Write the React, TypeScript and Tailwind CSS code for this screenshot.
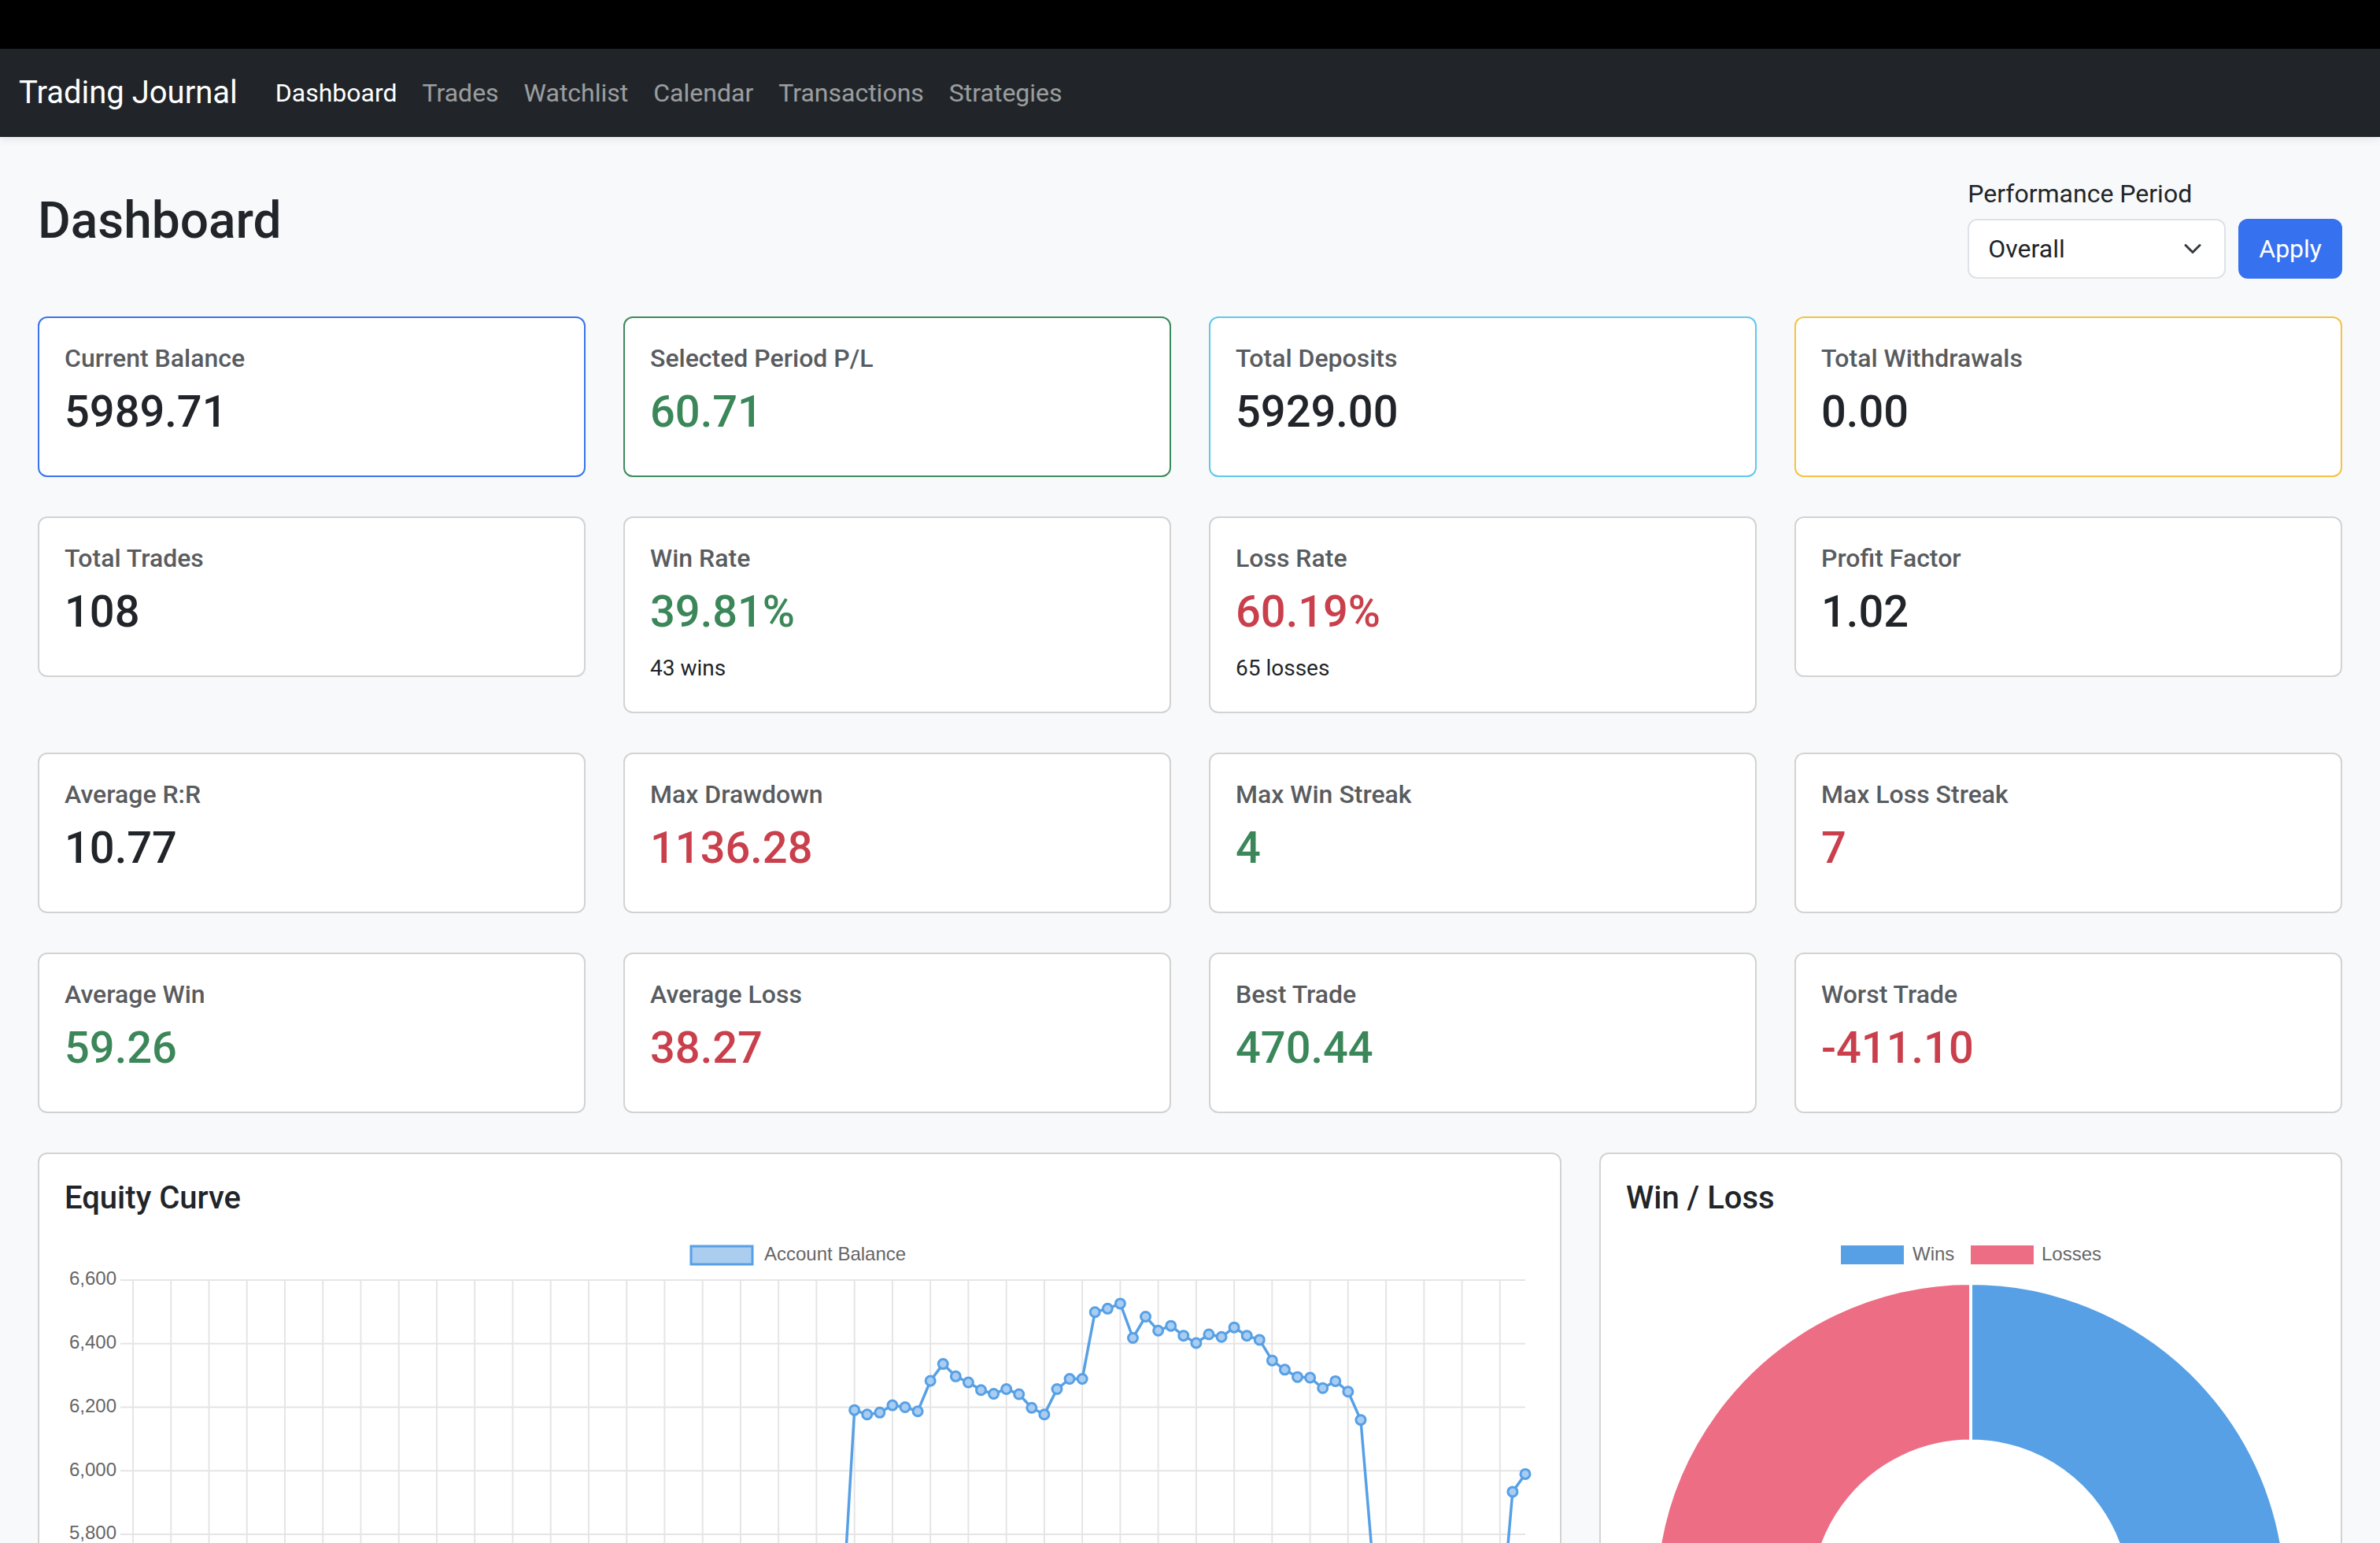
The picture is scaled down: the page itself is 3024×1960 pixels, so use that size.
import React from 'react'

type Tone = 'up' | 'down'

type Stat = {
  label: string
  value: string
  tone?: Tone
  note?: string
  border?: string
}

const stats: Stat[] = [
  { label: 'Current Balance', value: '5989.71', border: 'border-[#3a73ee]' },
  { label: 'Selected Period P/L', value: '60.71', tone: 'up', border: 'border-[#3d8a5c]' },
  { label: 'Total Deposits', value: '5929.00', border: 'border-[#5fc8ec]' },
  { label: 'Total Withdrawals', value: '0.00', border: 'border-[#f5c242]' },
  { label: 'Total Trades', value: '108' },
  { label: 'Win Rate', value: '39.81%', tone: 'up', note: '43 wins' },
  { label: 'Loss Rate', value: '60.19%', tone: 'down', note: '65 losses' },
  { label: 'Profit Factor', value: '1.02' },
  { label: 'Average R:R', value: '10.77' },
  { label: 'Max Drawdown', value: '1136.28', tone: 'down' },
  { label: 'Max Win Streak', value: '4', tone: 'up' },
  { label: 'Max Loss Streak', value: '7', tone: 'down' },
  { label: 'Average Win', value: '59.26', tone: 'up' },
  { label: 'Average Loss', value: '38.27', tone: 'down' },
  { label: 'Best Trade', value: '470.44', tone: 'up' },
  { label: 'Worst Trade', value: '-411.10', tone: 'down' },
]

const toneClass = (tone?: Tone) =>
  tone === 'up' ? 'text-[#3b8759]' : tone === 'down' ? 'text-[#c9404c]' : 'text-[#212529]'

// running account balance after each trade
const balance = [
  5000, 5040, 4985, 5020, 5075, 5110, 5060, 5135, 5180, 5150,
  5210, 5170, 5240, 5290, 5255, 5310, 5270, 5335, 5380, 5330,
  5295, 5350, 5410, 5370, 5440, 5490, 5455, 5520, 5480, 5545,
  5590, 5550, 5610, 5570, 5520, 5480, 5530, 5495, 5445, 5400,
  5460, 5415, 5370, 5420, 5385, 5340, 5395, 5440, 5410, 5465,
  5430, 5485, 5450, 5505, 5470, 5540, 5525,
  6191, 6177, 6183, 6206, 6200, 6187, 6283, 6336, 6297, 6278,
  6254, 6242, 6257, 6241, 6198, 6177, 6257, 6289, 6289, 6499,
  6510, 6526, 6418, 6485, 6441, 6456, 6425, 6402, 6429, 6421,
  6451, 6425, 6412, 6347, 6318, 6295, 6293, 6260, 6282, 6249,
  6160,
  5690, 5610, 5540, 5590, 5470, 5520, 5440, 5490, 5410, 5460, 5480,
  5934, 5989.71,
]

const BLUE = '#57a0e5'
const PINK = '#ed6d84'

const StatCard = ({ label, value, tone, note, border }: Stat) => (
  <div className={`rounded-xl border-2 bg-white p-8 ${border ?? 'border-[#d3d3d3]'}`}>
    <h6 className="mb-4 text-[32px] leading-[38px] font-medium text-[#595c5f]">{label}</h6>
    <h3 className={`mb-4 text-[56px] leading-[66px] font-medium ${toneClass(tone)}`}>{value}</h3>
    {note && <p className="text-[28px] leading-[46px] text-[#212529]">{note}</p>}
  </div>
)

const EquityChart = () => {
  const W = 1868
  const H = 935
  const left = 87
  const right = 1856
  const top = 64
  const yMax = 6600
  const yMin = 4600
  const perUnit = 0.40375
  const step = (right - left) / (balance.length - 1)
  const px = (i: number) => left + i * step
  const py = (v: number) => top + (yMax - v) * perUnit
  const bottom = py(yMin)
  const yTicks = Array.from({ length: 11 }, (_, i) => yMax - i * 200)
  const xTicks = balance.map((_, i) => i).filter(i => i % 3 === 0)
  const line = balance.map((v, i) => `${i ? 'L' : 'M'}${px(i).toFixed(1)} ${py(v).toFixed(1)}`).join(' ')

  return (
    <svg width={W} height={H} viewBox={`0 0 ${W} ${H}`} fontFamily="'Liberation Sans', Arial, sans-serif">
      {/* legend */}
      <rect x={796} y={21} width={78} height={23} fill="#aacdf0" stroke={BLUE} strokeWidth={3} />
      <text x={889} y={33} fontSize={24} fill="#666" dominantBaseline="middle">Account Balance</text>

      {/* grid */}
      {xTicks.map(i => (
        <line key={i} x1={px(i)} x2={px(i)} y1={top} y2={bottom + 16} stroke="#e5e5e5" strokeWidth={2} />
      ))}
      {yTicks.map(t => (
        <g key={t}>
          <line x1={left - 16} x2={right} y1={py(t)} y2={py(t)} stroke="#e5e5e5" strokeWidth={2} />
          <text x={66} y={py(t)} fontSize={24} fill="#666" textAnchor="end" dominantBaseline="middle">
            {t.toLocaleString('en-US')}
          </text>
        </g>
      ))}

      {/* series */}
      <path d={line} fill="none" stroke={BLUE} strokeWidth={3.5} strokeLinejoin="round" />
      {balance.map((v, i) => (
        <circle key={i} cx={px(i)} cy={py(v)} r={6} fill="#a9cdf2" stroke={BLUE} strokeWidth={3} />
      ))}
    </svg>
  )
}

const arc = (cx: number, cy: number, R: number, r: number, a0: number, a1: number) => {
  const rad = (a: number) => (a * Math.PI) / 180
  const p = (rr: number, a: number) => `${(cx + rr * Math.cos(rad(a))).toFixed(2)} ${(cy + rr * Math.sin(rad(a))).toFixed(2)}`
  const large = a1 - a0 > 180 ? 1 : 0
  return `M${p(R, a0)} A${R} ${R} 0 ${large} 1 ${p(R, a1)} L${p(r, a1)} A${r} ${r} 0 ${large} 0 ${p(r, a0)} Z`
}

const WinLossChart = ({ wins, losses }: { wins: number; losses: number }) => {
  const size = 876
  const cx = 438
  const cy = 469
  const R = 401
  const r = 200.5
  const split = -90 + (wins / (wins + losses)) * 360

  return (
    <svg width={size} height={size} viewBox={`0 0 ${size} ${size}`} fontFamily="'Liberation Sans', Arial, sans-serif">
      <rect x={273} y={20} width={80} height={24} fill={BLUE} />
      <text x={364} y={33} fontSize={24} fill="#666" dominantBaseline="middle">Wins</text>
      <rect x={438} y={20} width={80} height={24} fill={PINK} />
      <text x={528} y={33} fontSize={24} fill="#666" dominantBaseline="middle">Losses</text>

      <path d={arc(cx, cy, R, r, -90, split)} fill={BLUE} stroke="#fff" strokeWidth={4} />
      <path d={arc(cx, cy, R, r, split, 270)} fill={PINK} stroke="#fff" strokeWidth={4} />
    </svg>
  )
}

const navLinks = ['Dashboard', 'Trades', 'Watchlist', 'Calendar', 'Transactions', 'Strategies']

export default function App() {
  return (
    <div className="flex h-screen flex-col overflow-hidden bg-[#f8f9fa] font-[Roboto,sans-serif] text-[#212529]">
      <div className="h-[62px] shrink-0 bg-black" />

      <nav className="relative z-10 flex h-[112px] shrink-0 items-center bg-[#212529] px-6 shadow-[0_4px_10px_rgba(0,0,0,0.07)]">
        <span className="mr-8 text-[40px] leading-[60px] text-white">Trading Journal</span>
        <ul className="flex">
          {navLinks.map((link, idx) => (
            <li key={link}>
              <a className={`px-4 text-[32px] leading-[48px] ${idx === 0 ? 'text-white' : 'text-white/55'}`}>{link}</a>
            </li>
          ))}
        </ul>
      </nav>

      <main className="flex-1 overflow-hidden px-12 pt-12">
        <div className="mb-12 flex items-center justify-between">
          <h2 className="mb-4 text-[64px] leading-[77px] font-medium">Dashboard</h2>
          <div className="flex flex-col">
            <label className="mb-2 text-[32px] leading-[48px]">Performance Period</label>
            <div className="flex gap-4">
              <div className="flex h-[76px] w-[328px] items-center justify-between rounded-xl border-2 border-[#dee2e6] bg-white px-6 text-[32px]">
                <span>Overall</span>
                <svg className="h-6 w-8" viewBox="0 0 16 16" fill="none">
                  <path d="m2 5 6 6 6-6" stroke="#343a40" strokeWidth={2} strokeLinecap="round" strokeLinejoin="round" />
                </svg>
              </div>
              <button className="h-[76px] rounded-xl border-2 border-[#3671ef] bg-[#3671ef] px-6 text-[32px] text-white">
                Apply
              </button>
            </div>
          </div>
        </div>

        <div className="grid grid-cols-4 items-start gap-x-12 gap-y-[50px]">
          {stats.map(s => (
            <StatCard key={s.label} {...s} />
          ))}
        </div>

        <div className="mt-[50px] grid grid-cols-12 items-start gap-x-12">
          <div className="col-span-8 rounded-xl border-2 border-[#d3d3d3] bg-white p-8">
            <h5 className="mb-4 text-[40px] leading-[48px] font-medium">Equity Curve</h5>
            <EquityChart />
          </div>
          <div className="col-span-4 rounded-xl border-2 border-[#d3d3d3] bg-white p-8">
            <h5 className="mb-4 text-[40px] leading-[48px] font-medium">Win / Loss</h5>
            <WinLossChart wins={43} losses={65} />
          </div>
        </div>
      </main>
    </div>
  )
}
